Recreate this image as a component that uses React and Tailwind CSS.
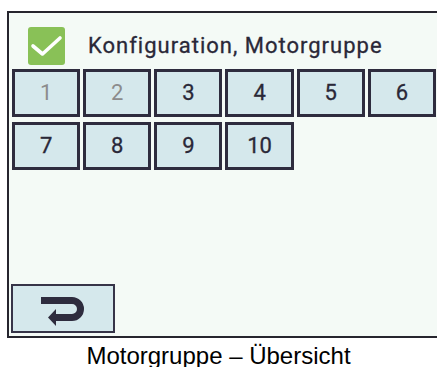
export default function App() {
  const nums = [1, 2, 3, 4, 5, 6, 7, 8, 9, 10];
  return (
    <div className="w-[437px] h-[367px] bg-white overflow-hidden">
      <div className="ml-[7px] mt-[11px] w-[430px] h-[327px] bg-[#f4faf6] border-l-2 border-t-2 border-b-2 border-[#26252e] flex flex-col">
        <div className="flex items-center pt-[9px] pl-[19px] h-[56px]">
          <div className="w-[37px] h-[38px] rounded-[3px] bg-[#89c157] flex items-center justify-center">
            <svg width="37" height="38" viewBox="0 0 37 38">
              <path d="M5 19 L14.5 27 L32 11" fill="none" stroke="white" strokeWidth="3.6" strokeLinecap="round" strokeLinejoin="round" />
            </svg>
          </div>
          <div
            className="ml-[23px] text-[22px] leading-none tracking-[1px] text-[#2a2838] [-webkit-text-stroke:0.3px_#2a2838]"
            style={{ fontFamily: "Roboto, sans-serif" }}
          >
            Konfiguration, Motorgruppe
          </div>
        </div>
        <div className="grid grid-cols-6 gap-x-[3px] gap-y-[5px] pl-[3px] pr-[1px]">
          {nums.map((n) => (
            <div
              key={n}
              className={
                "h-[48px] border-[3px] border-[#2e2c3e] bg-[#d5e8ec] flex items-center justify-center text-[22px] leading-none " +
                (n <= 2 ? "text-[#8c8c8c]" : "text-[#2a2838] [-webkit-text-stroke:0.3px_#2a2838]")
              }
              style={{ fontFamily: "Roboto, sans-serif" }}
            >
              {n}
            </div>
          ))}
        </div>
        <div className="mt-auto mb-[3px] ml-[2px] w-[104px] h-[49px] border-2 border-[#363448] bg-[#d5e8ec] flex items-center justify-center">
          <svg width="44" height="30" viewBox="0 0 44 30" className="mt-[4px]">
            <path d="M0 4.5 H31 A8.5 8.5 0 0 1 31 21.5 H13" fill="none" stroke="#2e2c3e" strokeWidth="7" />
            <polygon points="7,21.5 15,13 15,30" fill="#2e2c3e" />
          </svg>
        </div>
      </div>
      <div
        className="mt-[7px] text-center text-[24px] leading-[22px] text-black"
        style={{ fontFamily: '"Liberation Sans", Arial, sans-serif' }}
      >
        Motorgruppe – Übersicht
      </div>
    </div>
  );
}
